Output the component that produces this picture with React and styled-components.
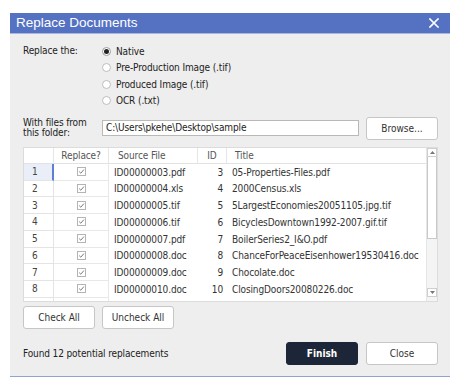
import React from "react";
import styled, { createGlobalStyle } from "styled-components";

const FONT = `"DejaVu Sans Condensed", "Liberation Sans", Arial, sans-serif`;

const GlobalStyle = createGlobalStyle`
  html, body { margin: 0; padding: 0; background: #ffffff; }
  body { font-family: ${FONT}; font-size: 10px; letter-spacing: -0.12px; color: #333; }
  * { box-sizing: border-box; }
`;

const Dialog = styled.div`
  margin: 13px 0 0 10px;
  width: 440px;
  background: #eeeeee;
  border-bottom: 1px solid #8fa2d4;
`;

const TitleBar = styled.div`
  height: 21px;
  background: #5572c2;
  border-bottom: 1px solid #a9b7e0;
  color: #fff;
  display: flex;
  align-items: center;
  justify-content: space-between;
  padding: 0 11px 1px 6px;
  font-family: "Liberation Sans", Arial, sans-serif;
  font-size: 13.5px;
  letter-spacing: 0;
`;

const CloseIcon = () => (
  <svg width="10" height="10" viewBox="0 0 10 10">
    <path d="M1 1 L9 9 M9 1 L1 9" stroke="#fff" strokeWidth="1.6" strokeLinecap="square" />
  </svg>
);

const Body = styled.div`
  padding: 8.75px 12px 11px 13px;
  display: flex;
  flex-direction: column;
`;

const ReplaceRow = styled.div`
  display: flex;
`;

const FieldLabel = styled.div`
  width: 79px;
  flex: none;
  line-height: ${(p) => p.$lh || "16.5px"};
  color: #222;
`;

const RadioList = styled.div`
  display: flex;
  flex-direction: column;
`;

const RadioItem = styled.label`
  height: 16.5px;
  display: flex;
  align-items: center;
  gap: 5px;
  color: #222;
`;

const RadioDot = styled.span`
  width: 9px;
  height: 9px;
  border-radius: 50%;
  border: 1px solid ${(p) => (p.$on ? "#9a9a9a" : "#bdbdbd")};
  background: #fff;
  display: flex;
  align-items: center;
  justify-content: center;
  &::after {
    content: "";
    width: 5px;
    height: 5px;
    border-radius: 50%;
    background: ${(p) => (p.$on ? "#222" : "transparent")};
  }
`;

const FolderRow = styled.div`
  margin-top: 8px;
  height: 23px;
  display: flex;
  align-items: center;
`;

const PathInput = styled.div`
  width: 257px;
  height: 16px;
  background: #fff;
  border: 1px solid #b9b9b9;
  padding: 0 3px;
  line-height: 14px;
  color: #222;
  white-space: nowrap;
`;

const Button = styled.button`
  width: 72px;
  height: 23px;
  border-radius: 3px;
  border: 1px solid ${(p) => (p.$primary ? "#1d2638" : "#c6c6c6")};
  background: ${(p) => (p.$primary ? "#1d2638" : "#fff")};
  color: ${(p) => (p.$primary ? "#fff" : "#333")};
  font-family: ${FONT};
  font-size: 10px;
  font-weight: ${(p) => (p.$primary ? "bold" : "normal")};
  padding: 0;
  margin-left: ${(p) => p.$ml || "0"};
  flex: none;
`;

const Grid = styled.div`
  margin-top: 7px;
  height: 155px;
  display: flex;
  background: #fff;
  border: 1px solid #dcdcdc;
  overflow: hidden;
`;

const Table = styled.div`
  flex: 1;
  display: grid;
  grid-template-columns: 30px 55px 89px 29px 1fr;
  grid-auto-rows: 16.75px;
  grid-template-rows: 16px;
  align-content: start;
  overflow: hidden;
`;

const HeadCell = styled.div`
  display: flex;
  align-items: center;
  justify-content: ${(p) => p.$justify || "flex-start"};
  padding-left: ${(p) => p.$pl || "0"};
  color: #555;
  background: #fff;
  border-bottom: 1px solid #e2e2e2;
  border-right: ${(p) => (p.$last ? "none" : "1px solid #e6e6e6")};
  white-space: nowrap;
`;

const NumCell = styled.div`
  display: flex;
  align-items: center;
  padding-left: 8px;
  color: #444;
  background: ${(p) => (p.$sel ? "#e9eef8" : "#fff")};
  border-bottom: 1px solid #e4e4e4;
  border-right: ${(p) => (p.$sel ? "2px solid #5c80d2" : "1px solid #e4e4e4")};
`;

const CheckCell = styled.div`
  display: flex;
  align-items: center;
  justify-content: center;
  border-bottom: 1px solid #e8e8e8;
  border-right: 1px solid #e8e8e8;
`;

const Cell = styled.div`
  display: flex;
  align-items: center;
  justify-content: ${(p) => (p.$right ? "flex-end" : "flex-start")};
  padding: ${(p) => (p.$right ? "0 4px 0 0" : "0 0 0 5px")};
  color: #333;
  white-space: nowrap;
  overflow: hidden;
`;

const CheckBox = () => (
  <svg width="9" height="9" viewBox="0 0 9 9">
    <rect x="0.5" y="0.5" width="8" height="8" fill="#fff" stroke="#b4b4b4" />
    <path d="M2.2 4.6 L3.8 6.2 L6.9 2.6" fill="none" stroke="#7a7a7a" strokeWidth="1" />
  </svg>
);

const ScrollBar = styled.div`
  width: 11px;
  flex: none;
  display: flex;
  flex-direction: column;
  background: #f4f4f4;
  border-left: 1px solid #e6e6e6;
`;

const ArrowBox = styled.div`
  height: 9px;
  display: flex;
  align-items: center;
  justify-content: center;
  background: #fff;
  border: 1px solid #cfcfcf;
  margin: ${(p) => (p.$down ? "auto 0 4px 0" : "0")};
`;

const Thumb = styled.div`
  height: 82px;
  background: #fff;
  border: 1px solid #c9c9c9;
  border-top: none;
`;

const Arrow = ({ down }) => (
  <svg width="5" height="3" viewBox="0 0 5 3">
    <path d={down ? "M0 0 L5 0 L2.5 3 Z" : "M0 3 L5 3 L2.5 0 Z"} fill="#777" />
  </svg>
);

const ButtonRow = styled.div`
  margin-top: 4px;
  display: flex;
  gap: 7px;
`;

const Footer = styled.div`
  margin-top: 13px;
  height: 23px;
  display: flex;
  align-items: center;
`;

const Status = styled.div`
  flex: 1;
  color: #222;
`;

const rows = [
  ["ID00000003.pdf", "3", "05-Properties-Files.pdf"],
  ["ID00000004.xls", "4", "2000Census.xls"],
  ["ID00000005.tif", "5", "5LargestEconomies20051105.jpg.tif"],
  ["ID00000006.tif", "6", "BicyclesDowntown1992-2007.gif.tif"],
  ["ID00000007.pdf", "7", "BoilerSeries2_I&O.pdf"],
  ["ID00000008.doc", "8", "ChanceForPeaceEisenhower19530416.doc"],
  ["ID00000009.doc", "9", "Chocolate.doc"],
  ["ID00000010.doc", "10", "ClosingDoors20080226.doc"],
];

export default function App() {
  return (
    <>
      <GlobalStyle />
      <Dialog>
        <TitleBar>
          <span>Replace Documents</span>
          <CloseIcon />
        </TitleBar>
        <Body>
          <ReplaceRow>
            <FieldLabel>Replace the:</FieldLabel>
            <RadioList>
              <RadioItem><RadioDot $on />Native</RadioItem>
              <RadioItem><RadioDot />Pre-Production Image (.tif)</RadioItem>
              <RadioItem><RadioDot />Produced Image (.tif)</RadioItem>
              <RadioItem><RadioDot />OCR (.txt)</RadioItem>
            </RadioList>
          </ReplaceRow>
          <FolderRow>
            <FieldLabel $lh="10.5px">With files from<br />this folder:</FieldLabel>
            <PathInput>C:\Users\pkehe\Desktop\sample</PathInput>
            <Button $ml="7px">Browse...</Button>
          </FolderRow>
          <Grid>
            <Table>
              <HeadCell />
              <HeadCell $justify="center">Replace?</HeadCell>
              <HeadCell $pl="9px">Source File</HeadCell>
              <HeadCell $justify="center">ID</HeadCell>
              <HeadCell $pl="8px" $last>Title</HeadCell>
              {rows.map((r, i) => (
                <React.Fragment key={i}>
                  <NumCell $sel={i === 0}>{i + 1}</NumCell>
                  <CheckCell><CheckBox /></CheckCell>
                  <Cell>{r[0]}</Cell>
                  <Cell $right>{r[1]}</Cell>
                  <Cell>{r[2]}</Cell>
                </React.Fragment>
              ))}
              <NumCell />
              <CheckCell />
              <Cell />
              <Cell />
              <Cell />
            </Table>
            <ScrollBar>
              <ArrowBox><Arrow /></ArrowBox>
              <Thumb />
              <ArrowBox $down><Arrow down /></ArrowBox>
            </ScrollBar>
          </Grid>
          <ButtonRow>
            <Button>Check All</Button>
            <Button>Uncheck All</Button>
          </ButtonRow>
          <Footer>
            <Status>Found 12 potential replacements</Status>
            <Button $primary>Finish</Button>
            <Button $ml="8px">Close</Button>
          </Footer>
        </Body>
      </Dialog>
    </>
  );
}
